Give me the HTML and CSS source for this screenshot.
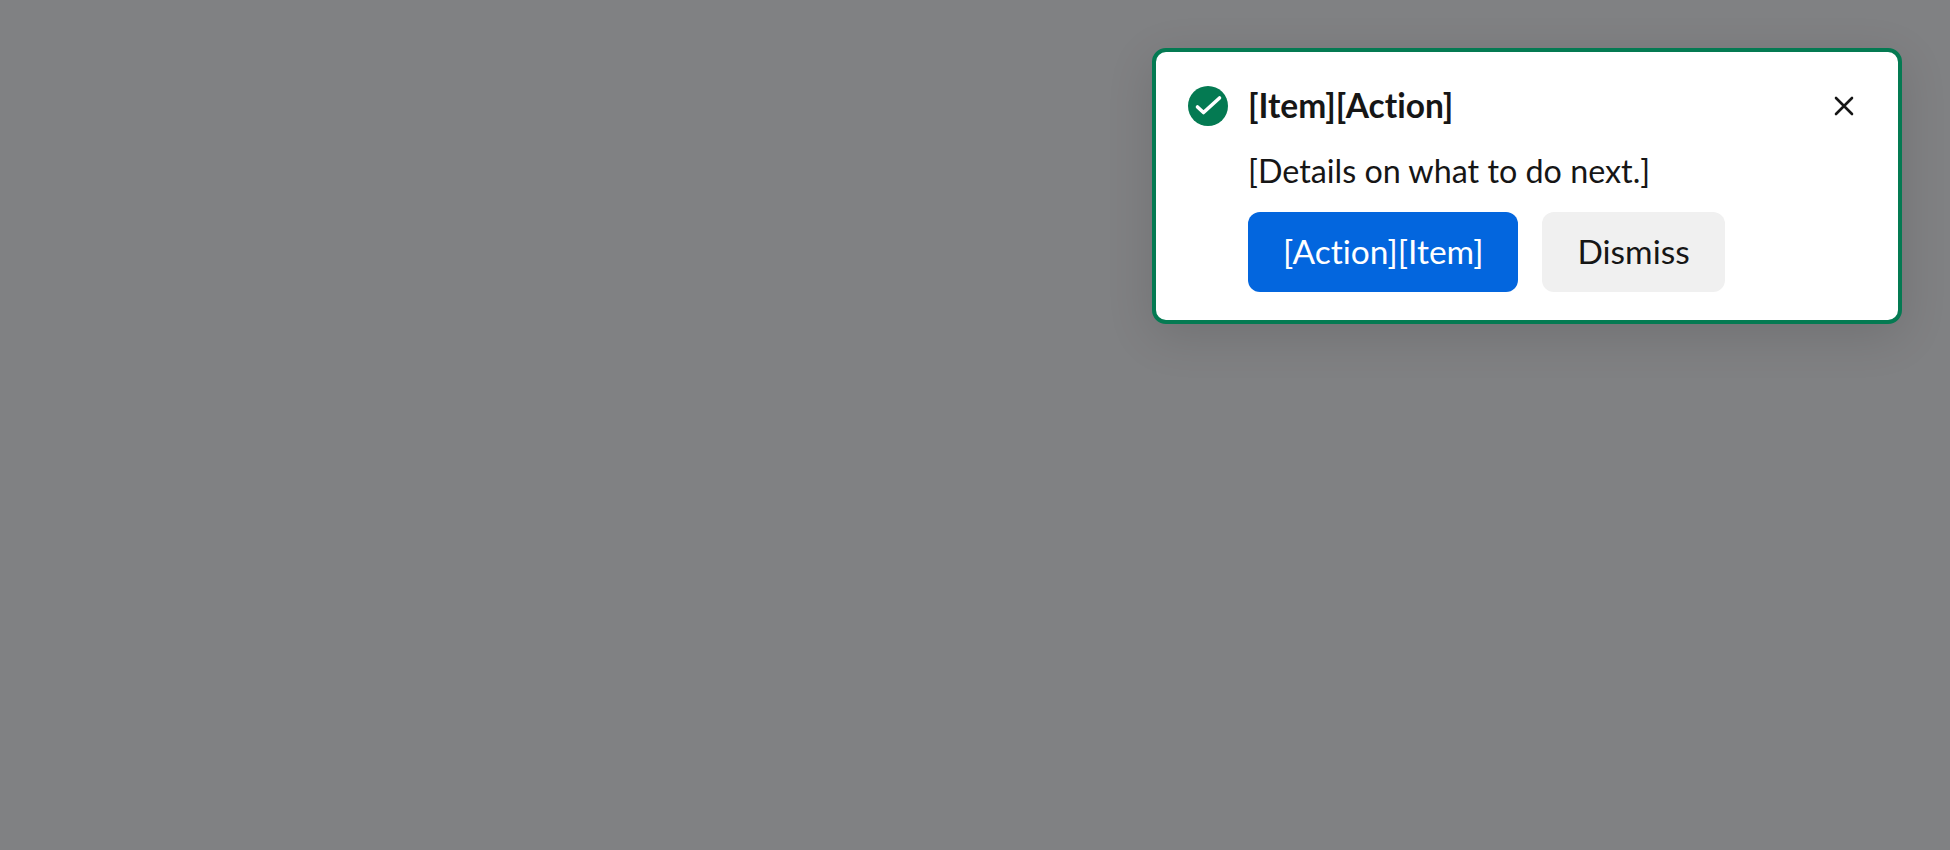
FILE: index.html
```html
<!DOCTYPE html>
<html lang="en">
<head>
    <meta charset="UTF-8">
    <title>Notification</title>
    <link rel="stylesheet" href="styles.css">
</head>
<body>
    <div class="overlay">
        <div class="toast">
            <div class="toast-header">
                <svg class="toast-icon" viewBox="0 0 40 40" width="40" height="40">
                    <circle cx="20" cy="20" r="20" fill="#047a52"/>
                    <path d="M9.5 21 L15.5 26.5 L31.5 12" fill="none" stroke="#fff" stroke-width="3.6" stroke-linecap="round" stroke-linejoin="round"/>
                </svg>
                <h2 class="toast-title">[Item][Action]</h2>
                <button class="toast-close" aria-label="Close">
                    <svg viewBox="0 0 20 20" width="20" height="20">
                        <path d="M2 2 L18 18 M18 2 L2 18" fill="none" stroke="#161616" stroke-width="2.6" stroke-linecap="round"/>
                    </svg>
                </button>
            </div>
            <div class="toast-body">
                <p class="toast-text">[Details on what to do next.]</p>
                <div class="toast-actions">
                    <button class="btn btn-primary">[Action][Item]</button>
                    <button class="btn btn-secondary">Dismiss</button>
                </div>
            </div>
        </div>
    </div>
</body>
</html>
```

FILE: styles.css
```css
body {
    margin: 0;
    font-family: "Lato", "Noto Sans", sans-serif;
    font-variant-ligatures: none;
    color: #161616;
}

.overlay {
    height: 100vh;
    background-color: #808183;
    display: flex;
    justify-content: flex-end;
    align-items: flex-start;
    padding: 48px 48px 0 0;
    box-sizing: border-box;
}

.toast {
    width: 750px;
    height: 276px;
    background-color: #fff;
    border: 4px solid #047a52;
    border-radius: 14px;
    padding: 28px 34px 28px 32px;
    box-sizing: border-box;
    box-shadow: 0 12px 48px rgba(0, 0, 0, 0.12);
}

.toast-header {
    display: flex;
    align-items: center;
    height: 52px;
}

.toast-icon {
    flex-shrink: 0;
    margin-right: 20px;
}

.toast-title {
    flex: 1;
    margin: 0;
    padding-bottom: 3px;
    font-size: 33.5px;
    font-weight: 700;
}

.toast-close {
    width: 40px;
    height: 40px;
    padding: 0;
    border: none;
    background: none;
    display: flex;
    align-items: center;
    justify-content: center;
    cursor: pointer;
}

.toast-body {
    margin-left: 60px;
}

.toast-text {
    margin: 16px 0;
    font-size: 32.3px;
    line-height: 46px;
    padding-bottom: 2px;
}

.toast-actions {
    display: flex;
    gap: 24px;
}

.btn {
    height: 80px;
    padding: 0 35px 2px;
    border: none;
    border-radius: 12px;
    font-family: inherit;
    font-size: 33.5px;
    font-variant-ligatures: none;
    cursor: pointer;
}

.btn-primary {
    background-color: #0366de;
    color: #fff;
}

.btn-secondary {
    background-color: #f0f0f0;
    color: #161616;
}
```
